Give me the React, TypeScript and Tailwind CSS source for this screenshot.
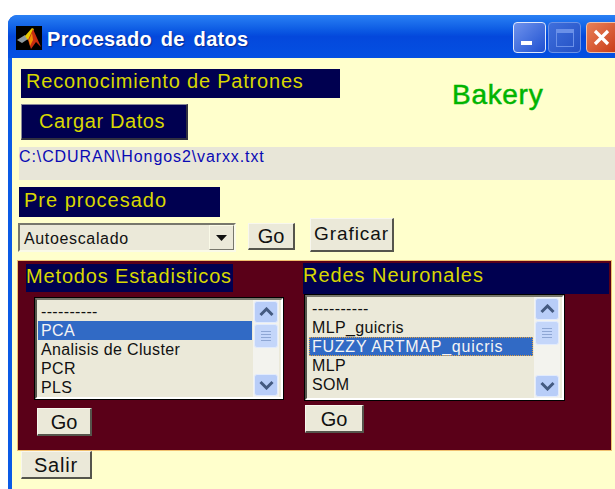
import React from "react";

const FONT = "font-['Liberation_Sans',Arial,sans-serif]";

function MatlabIcon() {
  return (
    <svg width="26" height="24" viewBox="0 0 26 24" className="shrink-0">
      <rect width="26" height="24" fill="#000" />
      <path d="M1 14 L9 9 L12 13 L6 17 Z" fill="#8f9aa0" />
      <path d="M9 10 L16 2 L18 3 L13 15 L11 13 Z" fill="#e8c800" />
      <path d="M12 14 L17 3 L21 12 L25 21 L20 16 L15 23 Z" fill="#c82c10" />
      <path d="M13 14 L16 7 L17 14 L14 20 Z" fill="#f09000" />
    </svg>
  );
}

function NavyLabel({ text, className }: { text: string; className: string }) {
  return <div className={`bg-[#000050] text-[#d8d800] whitespace-nowrap ${className}`}>{text}</div>;
}

function GreyButton({ text, className }: { text: string; className: string }) {
  return (
    <div
      className={`bg-[#ebe9d9] text-[#111] flex items-center justify-center border border-t-[#f8f7ee] border-l-[#f8f7ee] border-r-[#55554c] border-b-[#55554c] border-b-2 border-r-2 ${className}`}
    >
      {text}
    </div>
  );
}

function ScrollButton({ dir }: { dir: "up" | "down" }) {
  return (
    <div className="w-[24px] h-[22px] rounded-[3px] bg-[#b8cdf8] border border-[#e2ebfd] flex items-center justify-center">
      <svg width="15" height="10" viewBox="0 0 15 10">
        <path
          d={dir === "up" ? "M1.5 8 L7.5 2 L13.5 8" : "M1.5 2 L7.5 8 L13.5 2"}
          fill="none"
          stroke="#445a80"
          strokeWidth="3"
        />
      </svg>
    </div>
  );
}

function ScrollBar() {
  return (
    <div className="w-[26px] h-full bg-[#f3f3ee] flex flex-col items-center justify-between py-[1px] mr-[2px]">
      <div className="flex flex-col items-center">
        <ScrollButton dir="up" />
        <div className="mt-[1px] w-[24px] h-[24px] rounded-[3px] bg-[#c4d6fa] border border-[#e2ebfd] flex flex-col items-center justify-center gap-[2px]">
          <div className="w-[10px] h-px bg-[#8ea6d4]" />
          <div className="w-[10px] h-px bg-[#8ea6d4]" />
          <div className="w-[10px] h-px bg-[#8ea6d4]" />
          <div className="w-[10px] h-px bg-[#8ea6d4]" />
        </div>
      </div>
      <ScrollButton dir="down" />
    </div>
  );
}

function ListBox({
  rows,
  selected,
  focused,
  className,
  listPad,
}: {
  rows: string[];
  selected: number;
  focused?: boolean;
  className: string;
  listPad: string;
}) {
  return (
    <div
      className={`bg-[#ebe9d9] border-2 border-t-[#77776c] border-l-[#55554c] border-r-[#ffffff] border-b-[#ffffff] outline outline-1 outline-black flex ${className}`}
    >
      <div className={`flex-1 pt-[2px] pr-[1px] overflow-hidden ${listPad}`}>
        {rows.map((row, i) => (
          <div
            key={row}
            className={`h-[19px] leading-[19px] text-[16px] pl-[3px] whitespace-nowrap ${
              i === selected ? "bg-[#316ac5] text-[#f4f4f4]" : "text-[#111]"
            } ${
              i === selected && focused
                ? "tracking-[0.75px] outline-1 outline-dotted outline-[#e0a040] -outline-offset-1"
                : "tracking-[0.35px]"
            }`}
          >
            {row}
          </div>
        ))}
      </div>
      <ScrollBar />
    </div>
  );
}

export default function App() {
  return (
    <div className={`w-[615px] h-[489px] bg-white overflow-hidden pt-[15px] pl-[8px] ${FONT}`}>
      <div className="w-[640px] h-[474px] rounded-t-[9px] bg-[#0a5ae6] flex flex-col">
        {/* Title bar */}
        <div className="h-[43px] shrink-0 rounded-t-[9px] bg-gradient-to-b from-[#2a80f4] via-[#0448dc] to-[#0450e2] flex items-center pl-[8px] pr-[29px] pt-[2px]">
          <MatlabIcon />
          <span className="ml-[5px] mt-[2px] text-white font-bold text-[20px] tracking-[0.3px] [word-spacing:3px] [text-shadow:1px_1px_1px_#0a2a90]">
            Procesado de datos
          </span>
          <div className="ml-auto flex items-center">
            <div className="w-[33px] h-[31px] rounded-[4px] border border-[#dfe8fb] bg-gradient-to-br from-[#6f92ec] to-[#1e4fd0] flex items-end pl-[7px] pb-[7px]">
              <div className="w-[11px] h-[4px] bg-white" />
            </div>
            <div className="ml-[2px] w-[33px] h-[31px] rounded-[4px] border border-[#6d93e6] bg-gradient-to-br from-[#3f6fdc] to-[#2450c4] flex items-center justify-center">
              <div className="w-[18px] h-[18px] border border-[#6a90e8] border-t-[4px]" />
            </div>
            <div className="ml-[5px] w-[33px] h-[31px] rounded-[4px] border border-[#f0c0a8] bg-gradient-to-br from-[#e88058] to-[#c83810] flex items-center pl-[5px]">
              <svg width="20" height="18" viewBox="0 0 20 18">
                <path d="M3 2 L16 15 M16 2 L3 15" stroke="#fff" strokeWidth="3.2" />
              </svg>
            </div>
          </div>
        </div>

        {/* Figure area */}
        <div className="flex-1 ml-[4px] bg-[#ffffcc] flex flex-col pt-[11px]">
          <div className="flex pl-[9px]">
            <div className="flex flex-col">
              <NavyLabel text="Reconocimiento de Patrones" className="w-[319px] h-[29px] text-[20px] tracking-[0.8px] leading-[25px] pl-[5px]" />
              <div className="w-[167px] h-[36px] mt-[6px] bg-[#000050] text-[#d8d800] text-[20px] tracking-[0.6px] flex items-center pl-[17px] pb-[1px] border border-t-[#8a8a98] border-l-[#8a8a98] border-r-[#303040] border-b-[#303040] border-r-2 border-b-2">
                Cargar Datos
              </div>
            </div>
            <div className="ml-[112px] mt-[8px] text-[#00b400] text-[28px] leading-[36px] tracking-[0.7px] [-webkit-text-stroke:0.5px_#00b400]">
              Bakery
            </div>
          </div>

          <div className="ml-[7px] mt-[7px] h-[33px] bg-[#e8e6d8] text-[#0a0ab4] text-[16px] tracking-[0.9px] leading-[20px] whitespace-nowrap">
            C:\CDURAN\Hongos2\varxx.txt
          </div>

          <NavyLabel text="Pre procesado" className="ml-[7px] mt-[7px] w-[201px] h-[30px] text-[20px] tracking-[1px] leading-[26px] pl-[5px]" />

          <div className="flex ml-[6px] items-start">
            <div className="mt-[6px] w-[218px] h-[29px] bg-[#ebe9d9] border-2 border-t-[#77776c] border-l-[#77776c] border-r-[#fafae8] border-b-[#fafae8] flex items-center justify-between text-[16px] tracking-[0.65px] text-[#111] pl-[4px]">
              <span className="mt-[2px]">Autoescalado</span>
              <div className="w-[25px] h-[25px] bg-[#ebe9d9] border border-t-[#fafae8] border-l-[#fafae8] border-r-[#77776c] border-b-[#77776c] flex items-center justify-center">
                <svg width="11" height="6" viewBox="0 0 11 6">
                  <path d="M0 0 H11 L5.5 6 Z" fill="#111" />
                </svg>
              </div>
            </div>
            <GreyButton text="Go" className="mt-[6px] ml-[12px] w-[47px] h-[27px] text-[20px] pb-[1px]" />
            <GreyButton text="Graficar" className="mt-[1px] ml-[15px] w-[84px] h-[34px] text-[19px] tracking-[0.9px] pb-[1px]" />
          </div>

          {/* Method selection panel */}
          <div className="ml-[5px] mt-[8px] w-[595px] h-[191px] bg-[#5a0018] border border-[#f0c070] flex">
            <div className="w-[285px] pl-[8px] pt-[3px] flex flex-col">
              <NavyLabel text="Metodos Estadisticos" className="w-[207px] h-[28px] text-[20px] tracking-[0.85px] leading-[25px]" />
              <ListBox
                rows={["----------", "PCA", "Analisis de Cluster", "PCR", "PLS"]}
                selected={1}
                className="ml-[9px] mt-[6px] w-[248px] h-[101px]"
                listPad="pl-[1px]"
              />
              <GreyButton text="Go" className="ml-[11px] mt-[9px] w-[55px] h-[28px] text-[20px]" />
            </div>
            <div className="pt-[2px] flex flex-col">
              <NavyLabel text="Redes Neuronales" className="w-[306px] h-[31px] text-[20px] tracking-[0.95px] leading-[25px]" />
              <ListBox
                rows={["----------", "MLP_guicris", "FUZZY ARTMAP_quicris", "MLP", "SOM"]}
                selected={2}
                focused
                className="ml-[2px] mt-[1px] w-[259px] h-[105px]"
                listPad="pl-[2px]"
              />
              <GreyButton text="Go" className="ml-[2px] mt-[5px] w-[59px] h-[28px] text-[20px]" />
            </div>
          </div>

          <GreyButton text="Salir" className="ml-[9px] w-[71px] h-[28px] text-[20px] tracking-[0.8px]" />
        </div>
      </div>
    </div>
  );
}
